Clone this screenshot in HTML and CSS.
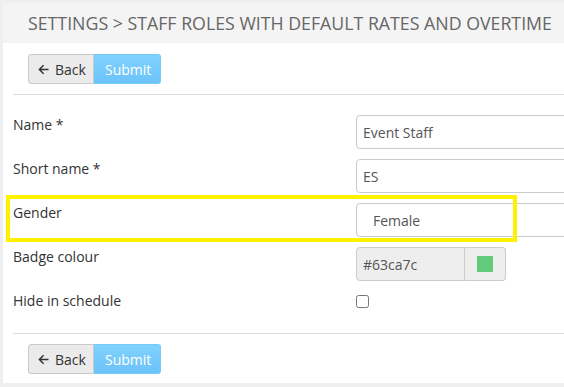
FILE: index.html
```html
<!DOCTYPE html>
<html lang="en">
<head>
  <meta charset="utf-8" />
  <title>Staff Roles | Settings</title>
  <meta name="viewport" content="width=device-width, initial-scale=1.0" />
  <link rel="stylesheet" href="styles.css">
</head>
<body>
  <div class="card">
    <div class="card-head">
      <h1>SETTINGS &gt; STAFF ROLES WITH DEFAULT RATES AND OVERTIME</h1>
    </div>
    <div class="card-body">
      <div class="toolbar">
        <div class="btn-group">
          <button class="btn btn-back" type="button">
            <svg class="icon-arrow" width="11" height="11" viewBox="0 0 11 11"><path d="M10.5 5.5H1.4M5.6 1.3L1.4 5.5L5.6 9.7" fill="none" stroke="#333" stroke-width="1.5"/></svg>
            Back
          </button>
          <button class="btn btn-submit" type="button">Submit</button>
        </div>
      </div>
      <hr class="sep-top">

      <form class="form">
        <div class="form-row">
          <label>Name *</label>
          <input class="control" type="text" value="Event Staff">
        </div>
        <div class="form-row">
          <label>Short name *</label>
          <input class="control" type="text" value="ES">
        </div>
        <div class="form-row is-marked">
          <label>Gender</label>
          <select class="control control-select">
            <option>Female</option>
          </select>
        </div>
        <div class="form-row">
          <label>Badge colour</label>
          <div class="colour-group">
            <input class="control colour-text" type="text" value="#63ca7c" disabled>
            <span class="colour-addon"><i class="swatch"></i></span>
          </div>
        </div>
        <div class="form-row">
          <label>Hide in schedule</label>
          <div><input class="check" type="checkbox"></div>
        </div>
      </form>

      <hr class="sep-bottom">
      <div class="toolbar">
        <div class="btn-group">
          <button class="btn btn-back" type="button">
            <svg class="icon-arrow" width="11" height="11" viewBox="0 0 11 11"><path d="M10.5 5.5H1.4M5.6 1.3L1.4 5.5L5.6 9.7" fill="none" stroke="#333" stroke-width="1.5"/></svg>
            Back
          </button>
          <button class="btn btn-submit" type="button">Submit</button>
        </div>
      </div>
    </div>
  </div>
</body>
</html>
```

FILE: styles.css
```css
*, *::before, *::after { box-sizing: border-box; }

body {
  margin: 0;
  font-family: 'Open Sans', 'Liberation Sans', sans-serif;
  font-size: 14px;
  color: #333;
  background: #efefef;
  overflow: hidden;
}

.card {
  margin: 3px 0 0 3px;
  width: 720px;
  background: #fff;
}

.card-head {
  height: 40px;
  padding: 0 25px;
  display: flex;
  align-items: center;
  background: #f4f4f4;
}

.card-head h1 {
  margin: 0;
  font-size: 17.75px;
  font-weight: 400;
  color: #666;
  white-space: nowrap;
}

.card-body {
  padding: 11px 0 9px 10px;
}

.toolbar { padding-left: 15px; }

.btn-group { display: flex; }

.btn {
  height: 30px;
  font-family: inherit;
  font-size: 14px;
  border: 1px solid #c9c9c9;
  cursor: pointer;
  display: flex;
  align-items: center;
}

.btn-back {
  width: 66px;
  padding: 0 0 0 9px;
  gap: 6px;
  color: #333;
  background: #ebebeb;
  border-radius: 3px 0 0 3px;
}

.btn-submit {
  width: 67px;
  padding: 0 0 0 11px;
  color: #fff;
  background: linear-gradient(#80d2fd, #6cc3f9);
  border-color: #76cafb;
  border-left: 0;
  border-radius: 0 3px 3px 0;
}

hr {
  border: 0;
  border-top: 1px solid #ddd;
}

.sep-top { margin: 10px 0 20px; }
.sep-bottom { margin: 8px 0 10px; }

.form-row {
  display: grid;
  grid-template-columns: 343px 300px;
  height: 34px;
  margin-bottom: 10px;
}
.form-row:last-child { margin-bottom: 0; }

.form-row label { line-height: 20px; }

.control {
  width: 300px;
  height: 34px;
  padding: 0 6px;
  font-family: inherit;
  font-size: 14px;
  color: #555;
  background: #fff;
  border: 1px solid #ccc;
  border-radius: 4px;
}

.control-select {
  appearance: none;
  padding-left: 16px;
}

.is-marked { position: relative; }
.is-marked::after {
  content: "";
  position: absolute;
  left: -7px;
  top: -8px;
  width: 511px;
  height: 47px;
  border: 4px solid #fff200;
  pointer-events: none;
}

.colour-group {
  display: flex;
  width: 150px;
}

.colour-text {
  width: 109px;
  background: #eee;
  border-radius: 4px 0 0 4px;
  opacity: 1;
}

.colour-addon {
  width: 41px;
  height: 34px;
  display: flex;
  align-items: center;
  justify-content: center;
  background: #eee;
  border: 1px solid #ccc;
  border-left: 0;
  border-radius: 0 4px 4px 0;
}

.swatch {
  width: 16px;
  height: 16px;
  background: #63ca7c;
}

.check {
  margin: 4px 0 0 0;
  width: 13px;
  height: 13px;
}
```
